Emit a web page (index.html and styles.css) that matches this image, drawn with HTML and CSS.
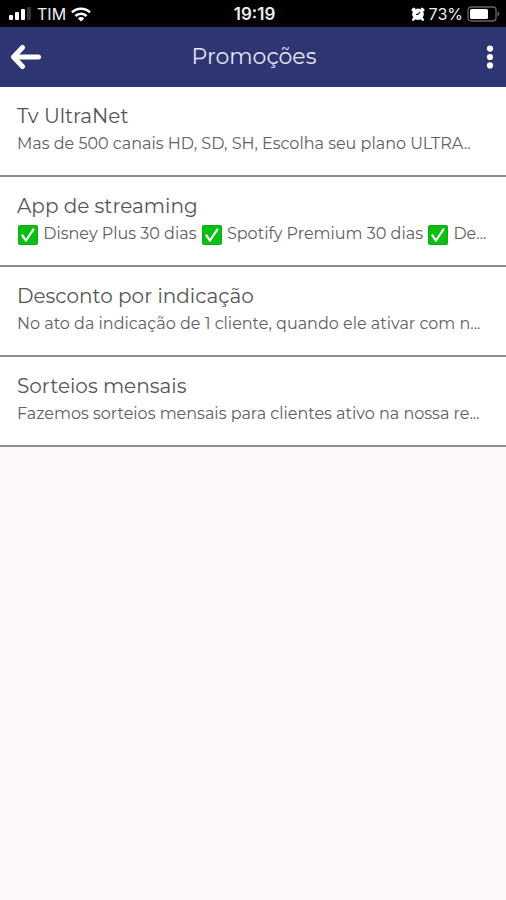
FILE: index.html
```html
<!DOCTYPE html>
<html lang="pt-BR">
<head>
  <meta charset="UTF-8">
  <meta name="viewport" content="width=device-width, initial-scale=1">
  <title>Promoções</title>
  <link rel="stylesheet" href="styles.css">
</head>
<body>

  <svg width="0" height="0" class="sprite" aria-hidden="true">
    <symbol id="check" viewBox="0 0 20 20">
      <rect width="20" height="20" rx="2" fill="#16a61c"/>
      <rect x="1" y="1" width="18" height="18" rx="1" fill="#08c010"/>
      <path d="M4.4 10.5l3.6 5L15.4 4.4" fill="none" stroke="#fff" stroke-width="2.2" stroke-linecap="round" stroke-linejoin="round"/>
    </symbol>
  </svg>

  <div class="status-bar">
    <div class="status-left">
      <svg width="23" height="14" viewBox="0 0 23 14" aria-hidden="true">
        <rect x="0" y="8" width="4" height="5" rx="1" fill="#fff"/>
        <rect x="6" y="5" width="4" height="8" rx="1" fill="#fff"/>
        <rect x="12" y="2" width="4" height="11" rx="1" fill="#fff"/>
        <rect x="18" y="0" width="4" height="13" rx="1" fill="#333"/>
      </svg>
      <span>TIM</span>
      <svg width="20" height="15" viewBox="0 0 20 15" fill="none" stroke="#fff" stroke-width="2.6" aria-hidden="true">
        <path d="M1 5.4a12.8 12.8 0 0 1 18 0"/>
        <path d="M4.4 9a8 8 0 0 1 11.2 0"/>
        <path d="M10 14.6L6.8 11.4a4.6 4.6 0 0 1 6.4 0z" fill="#fff" stroke="none"/>
      </svg>
    </div>
    <div class="status-time">19:19</div>
    <div class="status-right">
      <svg width="14" height="14" viewBox="0 0 14 14" aria-hidden="true">
        <circle cx="7" cy="7.2" r="5.8" fill="#fff"/>
        <path d="M1.8 3L3 1.8M12.2 3L11 1.8M3.4 11.4l-1.2 1.2M10.6 11.4l1.2 1.2" stroke="#fff" stroke-width="2.6" stroke-linecap="round"/>
        <path d="M9.2 4.8L7 7.4H5" fill="none" stroke="#222" stroke-width="1.1"/>
      </svg>
      <span>73%</span>
      <svg width="33" height="16" viewBox="0 0 33 16" aria-hidden="true">
        <rect x="1" y="1" width="28" height="14" rx="3" fill="none" stroke="#666" stroke-width="1.3"/>
        <rect x="3" y="3" width="18" height="10" rx="1.5" fill="#fff"/>
        <path d="M30.5 5.5a2.6 2.6 0 0 1 0 5z" fill="#666"/>
      </svg>
    </div>
  </div>

  <header class="toolbar">
    <button type="button" class="back-btn" aria-label="Voltar">
      <svg width="32" height="26" viewBox="0 0 32 26" fill="none" stroke="#fff" stroke-width="5" stroke-linecap="round" stroke-linejoin="round" aria-hidden="true">
        <path d="M12.5 3.5L3.5 13l9 9.5M4.5 13H28.5"/>
      </svg>
    </button>
    <h1>Promoções</h1>
    <button type="button" class="menu-btn" aria-label="Menu">
      <svg width="8" height="24" viewBox="0 0 8 24" fill="#fff" aria-hidden="true">
        <circle cx="4" cy="3.6" r="3.1"/>
        <circle cx="4" cy="12" r="3.1"/>
        <circle cx="4" cy="20.4" r="3.1"/>
      </svg>
    </button>
  </header>

  <main class="promo-list">
    <a class="promo" href="#tv">
      <h2>Tv UltraNet</h2>
      <p>Mas de 500 canais HD, SD, SH, Escolha seu plano ULTRA..</p>
    </a>
    <a class="promo" href="#streaming">
      <h2>App de streaming</h2>
      <p><svg class="check" aria-hidden="true"><use href="#check"/></svg> Disney Plus 30 dias <svg class="check" aria-hidden="true"><use href="#check"/></svg> Spotify Premium 30 dias <svg class="check" aria-hidden="true"><use href="#check"/></svg> De...</p>
    </a>
    <a class="promo" href="#indicacao">
      <h2>Desconto por indicação</h2>
      <p>No ato da indicação de 1 cliente, quando ele ativar com n...</p>
    </a>
    <a class="promo" href="#sorteios">
      <h2>Sorteios mensais</h2>
      <p>Fazemos sorteios mensais para clientes ativo na nossa re...</p>
    </a>
  </main>

</body>
</html>
```
FILE: styles.css
```css
* {
  box-sizing: border-box;
}

body {
  margin: 0;
  font-family: Montserrat, Inter, sans-serif;
  background-color: #fff8f8;
  color: #555;
}

svg {
  display: block;
  flex: none;
}

.sprite {
  position: absolute;
}

.status-bar {
  display: grid;
  grid-template-columns: 1fr auto 1fr;
  align-items: center;
  height: 27px;
  padding: 1px 6px 0 9px;
  background-color: #000;
  color: #eee;
  font-family: Inter, sans-serif;
  font-size: 16px;
}

.status-left,
.status-right {
  display: flex;
  align-items: center;
  gap: 5px;
}

.status-right {
  justify-content: flex-end;
  gap: 4px;
}

.status-time {
  font-size: 17px;
  font-weight: 600;
}

.toolbar {
  display: flex;
  align-items: center;
  justify-content: space-between;
  height: 60px;
  padding: 0 12px 0 10px;
  background-color: #2d3573;
}

.toolbar h1 {
  margin: 0;
  font-size: 22px;
  font-weight: 400;
  line-height: 28px;
  color: #e4e6f5;
}

.toolbar button {
  display: flex;
  padding: 0;
  border: none;
  background: none;
  cursor: pointer;
}

.toolbar .back-btn {
  width: 32px;
}

.toolbar .menu-btn {
  justify-content: flex-end;
  width: 28px;
}

.promo {
  display: block;
  padding: 16px 12px 20px 17px;
  border-bottom: 2px solid #8c8c8c;
  background-color: #fff;
  color: inherit;
  text-decoration: none;
}

.promo h2 {
  margin: 0 0 4px;
  font-size: 20px;
  font-weight: 400;
  line-height: 26px;
}

.promo p {
  margin: 0;
  overflow: hidden;
  font-size: 16px;
  line-height: 22px;
  white-space: nowrap;
  color: #606060;
}

.check {
  display: inline-block;
  width: 22px;
  height: 20px;
  vertical-align: middle;
}
```
